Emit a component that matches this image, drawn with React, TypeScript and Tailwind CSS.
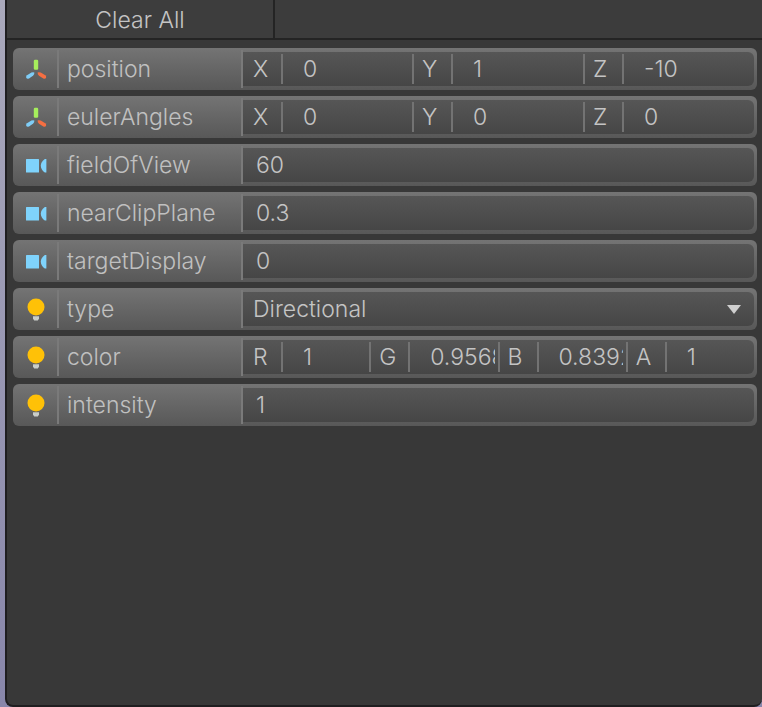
import { useState } from 'react';

type IconKind = 'transform' | 'camera' | 'light';

type Component = {
  axis: string;
  value: string;
};

type Property = {
  name: string;
  icon: IconKind;
  value?: string;
  options?: string[];
  components?: Component[];
};

const initialProperties: Property[] = [
  {
    name: 'position',
    icon: 'transform',
    components: [
      { axis: 'X', value: '0' },
      { axis: 'Y', value: '1' },
      { axis: 'Z', value: '-10' },
    ],
  },
  {
    name: 'eulerAngles',
    icon: 'transform',
    components: [
      { axis: 'X', value: '0' },
      { axis: 'Y', value: '0' },
      { axis: 'Z', value: '0' },
    ],
  },
  { name: 'fieldOfView', icon: 'camera', value: '60' },
  { name: 'nearClipPlane', icon: 'camera', value: '0.3' },
  { name: 'targetDisplay', icon: 'camera', value: '0' },
  { name: 'type', icon: 'light', value: 'Directional', options: ['Directional'] },
  {
    name: 'color',
    icon: 'light',
    components: [
      { axis: 'R', value: '1' },
      { axis: 'G', value: '0.9568627' },
      { axis: 'B', value: '0.8392157' },
      { axis: 'A', value: '1' },
    ],
  },
  { name: 'intensity', icon: 'light', value: '1' },
];

const PropertyIcon = ({ kind }: { kind: IconKind }) => {
  if (kind === 'transform') {
    return (
      <svg className="size-6" viewBox="0 0 24 24" aria-hidden="true">
        <rect x="9.8" y="2.8" width="4.4" height="10" rx="1.2" fill="#a6ee5c" />
        <path
          d="M3 18.300 7.400 15.600Q9 14.900 10.400 15.500 10.500 17.500 9 18.800L5 21.500Q3 22.400 2.200 20.800 1.900 19.200 3 18.300Z"
          fill="#7fcdf7"
        />
        <path
          d="M21.300 18.300 16.700 15.600Q15 14.900 13.600 15.500 13.500 17.500 15 18.800L19.300 21.500Q21.300 22.400 22.100 20.800 22.400 19.200 21.300 18.300Z"
          fill="#f56f42"
        />
      </svg>
    );
  }

  if (kind === 'camera') {
    return (
      <svg className="size-6" viewBox="0 0 24 24" aria-hidden="true">
        <rect x="2" y="6" width="13" height="13.6" rx="0.6" fill="#7fd3fc" />
        <path d="M22.4 6v13.6h-1.600c-2.400-1.800-4-3.800-4-6.800s1.600-5 4-6.800Z" fill="#7fd3fc" />
      </svg>
    );
  }

  return (
    <svg className="size-6" viewBox="0 0 24 24" aria-hidden="true">
      <circle cx="12" cy="9.9" r="8.5" fill="#ffc107" />
      <path d="M9 19.2h6v2.6l-1.200 1.700h-3.600L9 21.8Z" fill="#c9cdc9" />
    </svg>
  );
};

const ComponentFields = ({ property }: { property: Property }) => (
  <div className="flex h-full items-center">
    {property.components?.map(({ axis, value }, i) => {
      const id = `${property.name}-${axis}`;
      return (
        <div
          key={id}
          className={`flex h-[30px] min-w-0 flex-1 items-center ${i > 0 ? 'border-l-2 border-[#737373]' : ''}`}
        >
          <label
            htmlFor={id}
            className={`flex h-full shrink-0 items-center border-r-2 border-[#737373] ${i > 0 ? 'w-[39px] pl-2' : 'w-10 pl-[10px]'}`}
          >
            {axis}
          </label>
          <div className="min-w-0 flex-1 pr-[3px] pl-5">
            <input id={id} defaultValue={value} className="block w-full bg-transparent outline-none" />
          </div>
        </div>
      );
    })}
  </div>
);

const ValueField = ({ property }: { property: Property }) => {
  if (property.components) {
    return <ComponentFields property={property} />;
  }

  if (property.options) {
    return (
      <div className="grid h-full items-center">
        <select
          id={property.name}
          defaultValue={property.value}
          className="col-start-1 row-start-1 h-full w-full appearance-none bg-transparent pl-[10px] outline-none"
        >
          {property.options.map((option) => (
            <option key={option}>{option}</option>
          ))}
        </select>
        <svg
          className="pointer-events-none col-start-1 row-start-1 mr-[13px] h-[9px] w-[14px] justify-self-end"
          viewBox="0 0 14 9"
          aria-hidden="true"
        >
          <path d="M0 0h14L7 9Z" fill="#cfcfcf" />
        </svg>
      </div>
    );
  }

  return (
    <input
      id={property.name}
      defaultValue={property.value}
      className="block h-full w-full bg-transparent px-[13px] outline-none"
    />
  );
};

const PropertyRow = ({ property }: { property: Property }) => (
  <li className="flex h-[42px] overflow-hidden rounded-md bg-linear-to-b from-[#747474] to-[#585858]">
    <div className="flex w-[230px] shrink-0 items-center">
      <div className="flex h-[38px] w-[46px] shrink-0 items-center border-r-2 border-[#7a7a7a] pl-[11px]">
        <PropertyIcon kind={property.icon} />
      </div>
      <div className="flex h-[38px] flex-1 items-center border-r-2 border-[#7a7a7a] pl-2 text-[#c0c0c0]">
        {property.components ? (
          <span>{property.name}</span>
        ) : (
          <label htmlFor={property.name}>{property.name}</label>
        )}
      </div>
    </div>
    <div className="min-w-0 flex-1 py-1 pr-[3px]">
      <div className="h-full rounded-r-md bg-linear-to-b from-[#565656] to-[#464646]">
        <ValueField property={property} />
      </div>
    </div>
  </li>
);

const App = () => {
  const [properties, setProperties] = useState(initialProperties);

  return (
    <div className="flex min-h-screen bg-linear-to-b from-[#aaa9bc] to-[#8886aa] pl-[5px] font-['Inter',sans-serif] text-[23px] leading-7 font-[350] text-[#c4c4c4]">
      <main className="flex min-w-0 flex-1 flex-col overflow-hidden rounded-b-[8px] border-b-2 border-l-2 border-[#1f1e20] bg-[#383838]">
        <header className="flex h-10 shrink-0 border-b-2 border-[#242424] bg-[#3c3c3c]">
          <button
            type="button"
            onClick={() => setProperties([])}
            className="w-[268px] border-r-2 border-[#242424] bg-[#3d3d3d] pt-px"
          >
            Clear All
          </button>
        </header>
        <ul className="flex flex-col gap-[6px] pt-2 pr-[5px] pl-[6px]">
          {properties.map((property) => (
            <PropertyRow key={property.name} property={property} />
          ))}
        </ul>
      </main>
    </div>
  );
};

export default App;
